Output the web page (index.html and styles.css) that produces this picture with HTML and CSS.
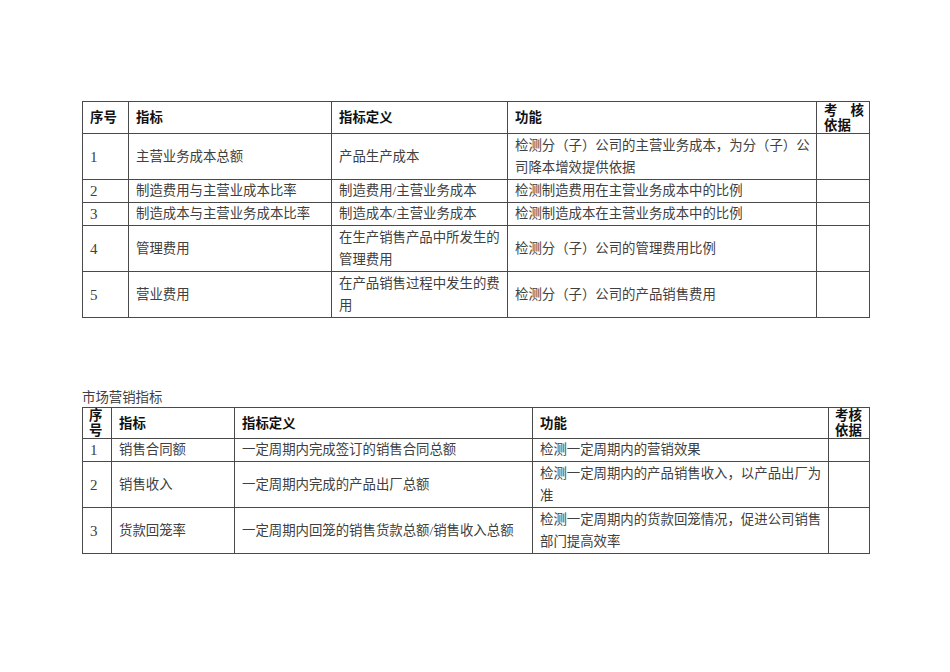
FILE: index.html
```html
<!DOCTYPE html>
<html lang="zh-CN">
<head>
<meta charset="utf-8">
<title>指标</title>
<link rel="stylesheet" href="styles.css">
</head>
<body>
<div class="page">
  <table class="grid t1">
    <colgroup>
      <col class="c46"><col class="c203"><col class="c176"><col class="c309"><col class="c53">
    </colgroup>
    <thead>
      <tr class="head">
        <th>序号</th><th>指标</th><th>指标定义</th><th>功能</th>
        <th class="basis"><span class="spread"><span>考</span><span>核</span></span>依据</th>
      </tr>
    </thead>
    <tbody>
      <tr class="r2"><td class="num">1</td><td>主营业务成本总额</td><td>产品生产成本</td><td class="just">检测分（子）公司的主营业务成本，为分（子）公司降本增效提供依据</td><td></td></tr>
      <tr class="r1"><td class="num">2</td><td>制造费用与主营业成本比率</td><td>制造费用/主营业务成本</td><td>检测制造费用在主营业务成本中的比例</td><td></td></tr>
      <tr class="r1"><td class="num">3</td><td>制造成本与主营业务成本比率</td><td>制造成本/主营业务成本</td><td>检测制造成本在主营业务成本中的比例</td><td></td></tr>
      <tr class="r2"><td class="num">4</td><td>管理费用</td><td class="just">在生产销售产品中所发生的管理费用</td><td>检测分（子）公司的管理费用比例</td><td></td></tr>
      <tr class="r2"><td class="num">5</td><td>营业费用</td><td class="just">在产品销售过程中发生的费用</td><td>检测分（子）公司的产品销售费用</td><td></td></tr>
    </tbody>
  </table>

  <div class="caption">市场营销指标</div>
  <table class="grid t2">
    <colgroup>
      <col class="d29"><col class="d123"><col class="d298"><col class="d296"><col class="d41">
    </colgroup>
    <thead>
      <tr class="head">
        <th class="narrow">序号</th><th>指标</th><th>指标定义</th><th>功能</th><th class="basis2">考核依据</th>
      </tr>
    </thead>
    <tbody>
      <tr class="r1"><td class="num">1</td><td>销售合同额</td><td>一定周期内完成签订的销售合同总额</td><td>检测一定周期内的营销效果</td><td></td></tr>
      <tr class="r2"><td class="num">2</td><td>销售收入</td><td>一定周期内完成的产品出厂总额</td><td class="just">检测一定周期内的产品销售收入，以产品出厂为准</td><td></td></tr>
      <tr class="r2"><td class="num">3</td><td>货款回笼率</td><td>一定周期内回笼的销售货款总额/销售收入总额</td><td class="just">检测一定周期内的货款回笼情况，促进公司销售部门提高效率</td><td></td></tr>
    </tbody>
  </table>
</div>
</body>
</html>
```

FILE: styles.css
```css
html, body {
  margin: 0;
  padding: 0;
  background: #ffffff;
}

.page {
  padding: 101px 0 0 82px;
  font-family: "Liberation Serif", "Noto Sans CJK SC", serif;
  font-size: 13.4px;
  color: #404040;
}

.grid {
  border-collapse: collapse;
  table-layout: fixed;
  width: 788px;
}

.grid th,
.grid td {
  border: 1px solid #4a4a4a;
  padding: 0 5px 0 7px;
  vertical-align: middle;
  text-align: left;
  line-height: 22px;
  overflow: hidden;
}

.grid th {
  font-family: "Liberation Sans", "Noto Sans CJK SC", sans-serif;
  font-weight: bold;
  color: #111111;
  line-height: 15px;
}

.grid .num {
  font-size: 15px;
}

.just {
  text-align: justify;
}

.t1 .head { height: 32px; }
.t1 .r1 { height: 23px; }
.t1 .r2 { height: 46px; }

.c46 { width: 46px; }
.c203 { width: 203px; }
.c176 { width: 176px; }
.c309 { width: 309px; }
.c53 { width: 53px; }

.basis {
  padding-right: 5px;
}

.spread {
  display: flex;
  justify-content: space-between;
}

.caption {
  margin-top: 70px;
  line-height: 19px;
  color: #404040;
}

.t2 .head { height: 31px; }
.t2 .r1 { height: 22px; }
.t2 .r2 { height: 46px; }

.t2 .narrow {
  padding: 0 0 0 6px;
}

.t2 .basis2 {
  padding: 0 3px 0 6px;
}

.d29 { width: 29px; }
.d123 { width: 123px; }
.d298 { width: 298px; }
.d296 { width: 296px; }
.d41 { width: 41px; }
```
